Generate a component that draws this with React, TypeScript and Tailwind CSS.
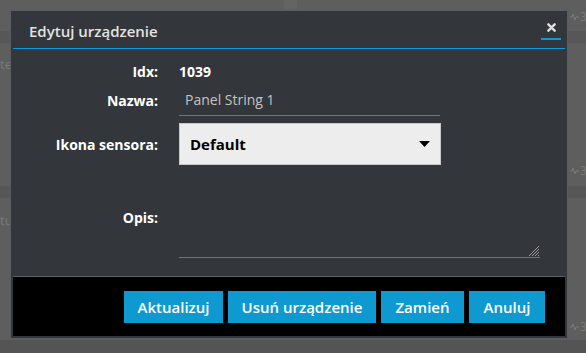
import React from 'react';

const font = { fontFamily: '"Open Sans", "Noto Sans", sans-serif' };

interface Row {
  label: string;
}

const buttons = [
  { text: 'Aktualizuj', w: 'w-[99px]' },
  { text: 'Usuń urządzenie', w: 'w-[148px]' },
  { text: 'Zamień', w: 'w-[83px]' },
  { text: 'Anuluj', w: 'w-[76px]' },
];

const Pulse: React.FC = () => (
  <span className="flex items-center gap-[1px] text-[12px] text-[#7a7a7a]">
    <svg width="9" height="8" viewBox="0 0 9 8">
      <path d="M0 4h2l1-3 2 6 1-3h3" fill="none" stroke="#7a7a7a" strokeWidth="1" />
    </svg>
    3
  </span>
);

const Label: React.FC<Row> = ({ label }) => (
  <div className="w-[145px] shrink-0 text-right text-[14px] font-bold text-white">{label}</div>
);

const App: React.FC = () => {
  return (
    <div className="relative w-[586px] h-[353px] overflow-hidden bg-[#5e5e5e]" style={font}>
      {/* page behind the dialog */}
      <div className="absolute left-[284px] top-0 w-[13px] h-[9px] bg-[#646464]" />
      <div className="absolute left-0 right-0 top-[31px] h-[12px] bg-[#575757]" />
      <div className="absolute left-0 right-0 top-[186px] h-[12px] bg-[#575757]" />
      <div className="absolute left-0 right-0 top-[340px] bottom-0 bg-[#545454]" />
      <div className="absolute left-0 top-[55px] text-[13px] text-[#7a7a7a]">te</div>
      <div className="absolute left-0 top-[211px] text-[13px] text-[#7a7a7a]">tu</div>
      <div className="absolute left-[570px] top-[8px]"><Pulse /></div>
      <div className="absolute left-[570px] top-[162px]"><Pulse /></div>
      <div className="absolute left-[570px] top-[318px]"><Pulse /></div>

      {/* dialog */}
      <div className="absolute left-[10px] top-[10px] w-[558px] h-[329px] border border-[#5a5d61] bg-[#33363a] p-[2px] flex flex-col">
        <div className="h-[36px] shrink-0 border-b border-[#0d9ad8] flex items-center justify-between pl-[16px] pr-[4px] pt-[2px]">
          <span className="text-[15px] font-semibold text-[#e2e2e2]">Edytuj urządzenie</span>
          <button className="w-[20px] h-[22px] border-b-2 border-[#0d9ad8] flex items-center justify-center mb-[5px] pb-[2px]">
            <svg width="9" height="9" viewBox="0 0 10 10">
              <path d="M1.5 1.5l7 7M8.5 1.5l-7 7" stroke="#e0e0e0" strokeWidth="2.6" strokeLinecap="round" />
            </svg>
          </button>
        </div>

        <div className="flex-1 flex flex-col pt-[12px]">
          <div className="flex items-center gap-[21px] h-[20px]">
            <Label label="Idx:" />
            <span className="text-[14px] font-bold text-white">1039</span>
          </div>

          <div className="flex items-center gap-[21px] mt-[4px]">
            <Label label="Nazwa:" />
            <div className="w-[261px] h-[31px] border-b border-[#1e8fc4] flex items-center pl-[6px] pb-[2px] text-[14px] text-[#c4c4c4]">
              Panel String 1
            </div>
          </div>

          <div className="flex items-center gap-[21px] mt-[7px]">
            <Label label="Ikona sensora:" />
            <div className="w-[262px] h-[42px] bg-[#ededed] border border-[#c8c8c8] flex items-center justify-between pl-[10px] pr-[10px]">
              <span className="text-[15px] font-bold text-black">Default</span>
              <svg width="11" height="6" viewBox="0 0 11 6">
                <path d="M0 0h11L5.5 6z" fill="#000" />
              </svg>
            </div>
          </div>

          <div className="flex items-center gap-[21px] mt-[11px]">
            <Label label="Opis:" />
            <div className="relative w-[361px] h-[82px] border-b border-[#1e8fc4]">
              <svg className="absolute right-0 bottom-0" width="12" height="12" viewBox="0 0 12 12">
                <path d="M11 1L1 11M11 4L4 11M11 7L7 11M11 10L10 11" stroke="#9a9a9a" strokeWidth="1" />
              </svg>
            </div>
          </div>
        </div>

        <div className="h-[60px] shrink-0 bg-black border-t border-[#5b5e62] flex items-center justify-end gap-[5px] pr-[20px] pt-[1px]">
          {buttons.map((b) => (
            <button
              key={b.text}
              className={`${b.w} h-[32px] bg-[#0e99d0] text-[15px] font-semibold text-white`}
            >
              {b.text}
            </button>
          ))}
        </div>
      </div>
    </div>
  );
};

export default App;
